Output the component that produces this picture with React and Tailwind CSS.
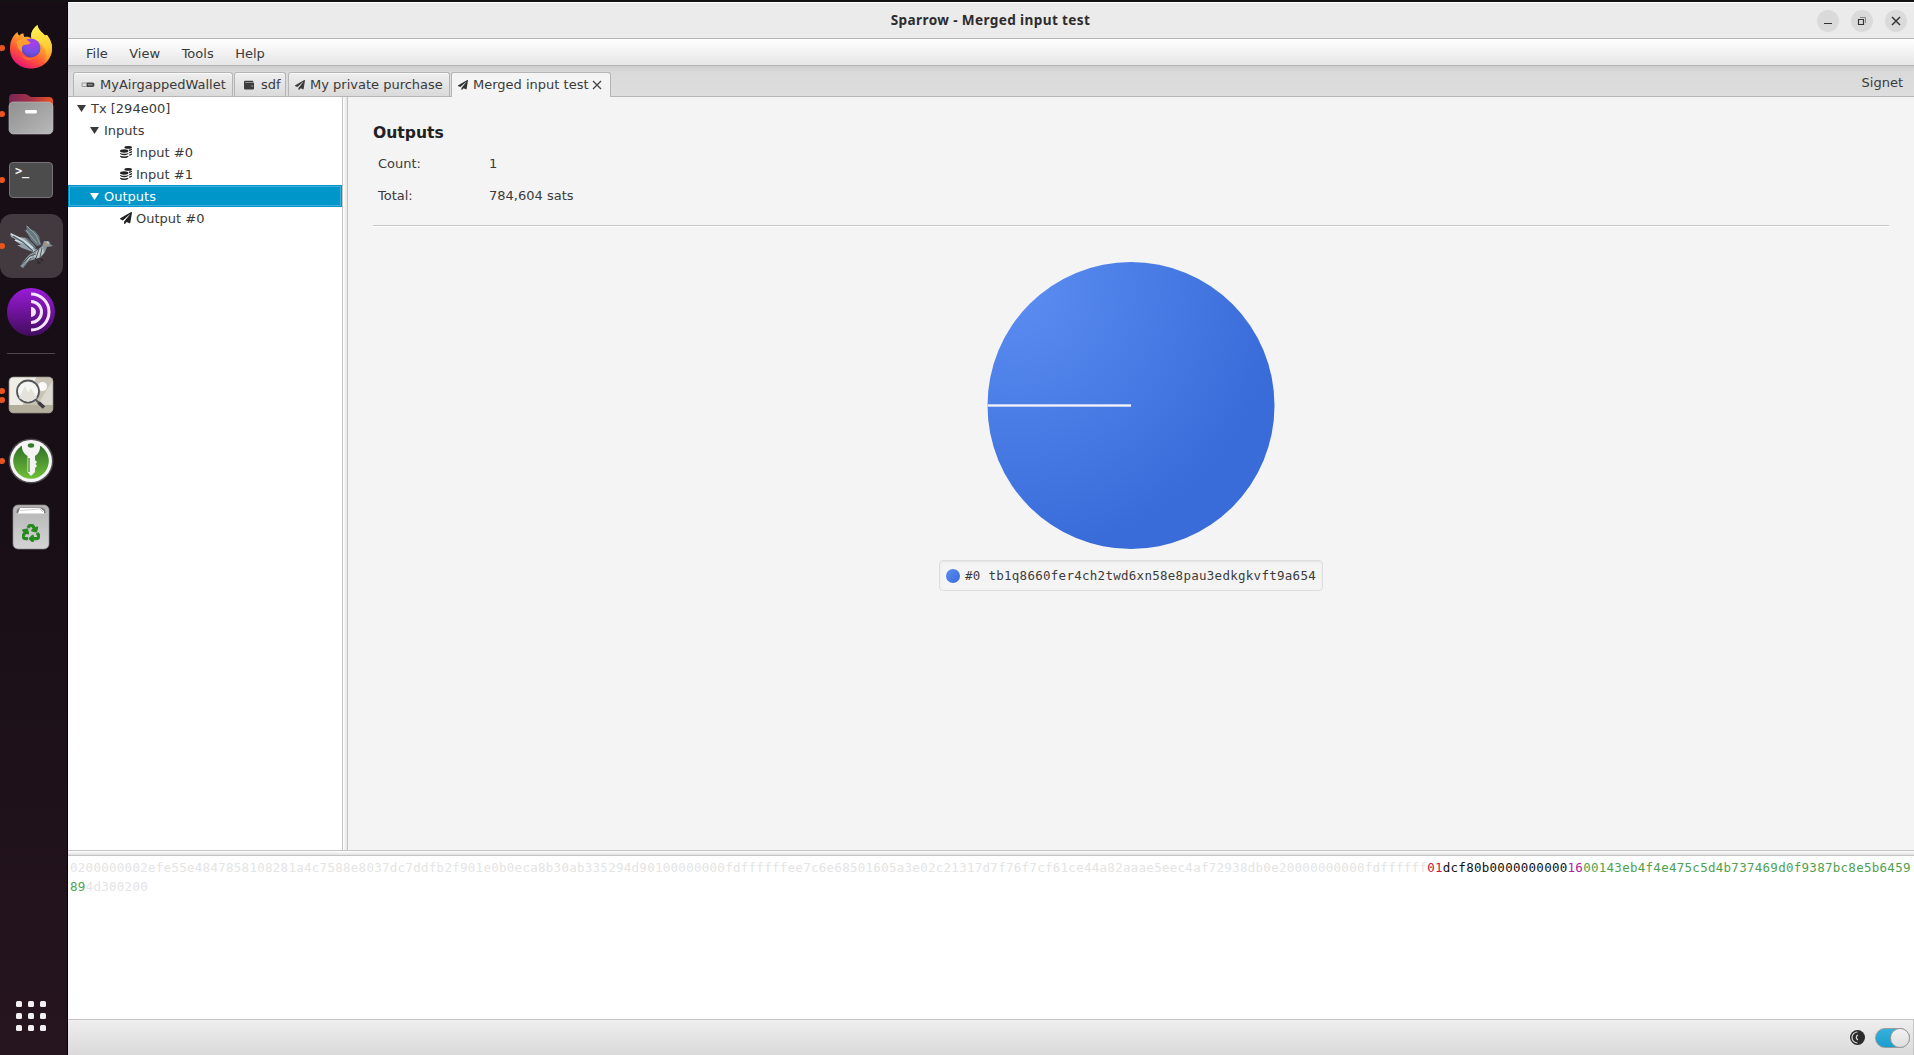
import React from "react";
import { FaPaperPlane, FaRecycle, FaWallet } from "react-icons/fa";

const SANS = "font-['DejaVu_Sans',sans-serif]";
const MONO = "font-['DejaVu_Sans_Mono',monospace]";

function Firefox() {
  return (
    <svg width="44" height="46" viewBox="0 0 44 46">
      <defs>
        <linearGradient id="ffBody" x1="0.8" y1="0.1" x2="0.3" y2="1">
          <stop offset="0" stopColor="#ffe94a" />
          <stop offset="0.4" stopColor="#ffa02c" />
          <stop offset="0.7" stopColor="#ff5238" />
          <stop offset="1" stopColor="#e5117a" />
        </linearGradient>
        <linearGradient id="ffFlame" x1="0.5" y1="0" x2="0.6" y2="1">
          <stop offset="0" stopColor="#fff44f" />
          <stop offset="0.6" stopColor="#ffcb35" />
          <stop offset="1" stopColor="#ff8a24" />
        </linearGradient>
        <radialGradient id="ffGlobe" cx="0.55" cy="0.25" r="0.8">
          <stop offset="0" stopColor="#b13ce6" />
          <stop offset="0.6" stopColor="#7450e6" />
          <stop offset="1" stopColor="#5a3fb5" />
        </radialGradient>
      </defs>
      <path d="M3 15C4 12 6 10 8.500 8C8.500 10 9.500 11 10.500 11.500C12 9.500 13.500 9.500 14.500 9.500L15 13C18 12.500 20 13 22 14C21.500 9 24 4.500 28.500 1C29 6 33 8 36 11.500L38 11C41 15 43 19 43 24C43 36 34 44.500 22 44.500C10 44.500 1 36 1 25C1 21 1.500 17.500 3 15Z" fill="url(#ffBody)" />
      <path d="M28.500 1C29 6 33 8 36 11.500L38 11C41 15 43 19 43 24C43 31 40 36 35 39C38 34 38 27 34 22C30 17 24 17 22.500 13C21.500 9 24 4.500 28.500 1Z" fill="url(#ffFlame)" />
      <circle cx="22" cy="24" r="9.500" fill="url(#ffGlobe)" />
      <path d="M8 17C11 14 18 14 21.500 19C20 21 17 20.500 15 21C12 22 13 26 12.500 28C9 25 7 21 8 17Z" fill="#ff9c30" />
      <path d="M12 29C14 34 22 36 28 31C25 38 14 38 12 29Z" fill="#ff6a30" />
    </svg>
  );
}

function Files() {
  return (
    <svg width="46" height="42" viewBox="0 0 46 42">
      <defs>
        <linearGradient id="fdBack" x1="0" x2="1"><stop offset="0" stopColor="#7a2757" /><stop offset="0.5" stopColor="#a63048" /><stop offset="1" stopColor="#e95420" /></linearGradient>
        <linearGradient id="fdFront" x1="0" x2="1" y1="0" y2="1"><stop offset="0" stopColor="#8f8f8f" /><stop offset="1" stopColor="#b9b9b9" /></linearGradient>
      </defs>
      <path d="M1 6Q1 1 5 1H17Q19 1 20.500 2.500Q22 4 24 4H41Q45 4 45 8V20H1Z" fill="url(#fdBack)" />
      <rect x="1" y="9" width="44" height="32" rx="4.500" fill="url(#fdFront)" stroke="#c0c0c0" strokeOpacity="0.6" />
      <rect x="17" y="17" width="12" height="3.400" rx="1.400" fill="#fff" />
    </svg>
  );
}

function Terminal() {
  return (
    <div className={`h-9 w-11 rounded-[4px] border border-[#747474] bg-[#4c4c4c] pl-[5px] pt-[1px] text-[12px] font-bold leading-[14px] tracking-[-0.3px] text-[#f4f4f4] ${MONO}`}>
      &gt;_
    </div>
  );
}

function Bird() {
  return (
    <svg width="44" height="46" viewBox="0 0 44 46">
      <path d="M17 2L21 6L26 8L30 13L32 22L28 23L22 17L18 10L15 7L18 8Z" fill="#66777d" />
      <path d="M18 3L27 12L31 21M17 7L28 20" stroke="#93a2a6" strokeWidth="1" fill="none" />
      <path d="M1 10L10 14L18 15L25 22L28 27L24 29L13 25L8 22L12 22L5 17L10 18L2 14Z" fill="#93a1ab" />
      <path d="M2 11L14 17L24 25M6 17L18 21L25 28" stroke="#d2dde2" strokeWidth="1.600" fill="none" />
      <path d="M4 13L15 20L24 28M17 15L27 26" stroke="#4f6069" strokeWidth="1.100" fill="none" />
      <path d="M27 28L33 23L35 18L39 18L41 21L44 23L38 24L36 29L32 34L27 36L20 38L14 45L11 43L17 35L21 31Z" fill="#87949a" />
      <path d="M28 28L34 24L35 30L30 35L24 34ZM20 34L24 33L17 40Z" fill="#bcc6c8" />
      <path d="M11 43L21 33L27 31M15 44L22 35M30 26L27 35M33 25L31 34" stroke="#4c595f" strokeWidth="1" fill="none" />
      <path d="M36 20L39 18L41 20L38 22Z" fill="#b5bec0" />
      <circle cx="37.500" cy="21" r="1.300" fill="#b98d5e" />
      <path d="M26 35L31 40M30 35L34 38M28 40H32M32 38L34 36" stroke="#29262b" strokeWidth="1" />
    </svg>
  );
}

function Tor() {
  return (
    <svg width="48" height="48" viewBox="0 0 48 48">
      <defs>
        <linearGradient id="torG" x1="0" x2="0" y1="0" y2="1"><stop offset="0" stopColor="#9a1bda" /><stop offset="1" stopColor="#420c5d" /></linearGradient>
      </defs>
      <circle cx="24" cy="24" r="24" fill="url(#torG)" />
      <path d="M24 6A18 18 0 0 1 24 42M24 13.500A10.500 10.500 0 0 1 24 34.500" fill="none" stroke="#f4e6ff" strokeWidth="3" />
      <path d="M24 19A5 5 0 0 1 24 29Z" fill="#f4e6ff" />
    </svg>
  );
}

function Viewer() {
  return (
    <svg width="46" height="38" viewBox="0 0 46 38">
      <defs><clipPath id="vwClip"><rect x="1" y="1" width="44" height="36" rx="4.500" /></clipPath></defs>
      <g clipPath="url(#vwClip)">
        <rect width="46" height="38" fill="#eeeee7" />
        <path d="M29 0H46V30H14Z" fill="#c9c3b5" />
        <path d="M46 2V30H29Z" fill="#dcdad0" />
        <rect y="29" width="46" height="9" fill="#b4ae9c" />
      </g>
      <circle cx="34.500" cy="10.500" r="4.500" fill="#fafafa" />
      <circle cx="20" cy="15.500" r="11" fill="#f5f5f3" stroke="#55565a" strokeWidth="1.800" />
      <path d="M11 22L17 10L20 17L23 12L29 22L20 26Z" fill="#e3e3dc" />
      <path d="M28 24L31 27" stroke="#55565a" strokeWidth="2" />
      <path d="M30.500 26.500L36 31.500" stroke="#3c3c40" strokeWidth="3.600" />
      <rect x="1" y="1" width="44" height="36" rx="4.500" fill="none" stroke="#8d8a82" strokeOpacity="0.7" />
    </svg>
  );
}

function KeyIcon() {
  return (
    <svg width="46" height="46" viewBox="0 0 46 46">
      <defs>
        <linearGradient id="kpG" x1="0" x2="0" y1="0" y2="1"><stop offset="0" stopColor="#2c6b28" /><stop offset="1" stopColor="#6fc037" /></linearGradient>
      </defs>
      <circle cx="23" cy="23" r="22.500" fill="#4b4a4c" />
      <circle cx="23" cy="23" r="21" fill="#f6f6f6" />
      <circle cx="23" cy="23" r="17.800" fill="url(#kpG)" />
      <path d="M14 7Q23 0 32 7Q33 14 27 18V22L29 24L27.500 26L29 28L27 30V34L23 38L19.500 34V18Q13 14 14 7Z" fill="#f4f4f4" />
      <ellipse cx="23" cy="7.500" rx="3.200" ry="2.200" fill="#35792b" />
      <path d="M21 20V34" stroke="#549b34" strokeWidth="1.500" />
    </svg>
  );
}

function Trash() {
  return (
    <div className="relative flex h-[46px] w-[38px] items-end justify-center pb-2">
      <svg className="absolute inset-0" width="38" height="46" viewBox="0 0 38 46">
        <defs>
          <linearGradient id="trG" x1="0" x2="0" y1="0" y2="1"><stop offset="0" stopColor="#b4b4b4" /><stop offset="1" stopColor="#d4d4d4" /></linearGradient>
        </defs>
        <rect x="1" y="1" width="36" height="44" rx="5" fill="url(#trG)" stroke="#8b8b8b" strokeOpacity="0.7" />
        <path d="M4.500 9Q4.500 3.500 9 3.500H29Q33.500 3.500 33.500 9Z" fill="#777" />
        <path d="M6 9.500L8 4H28L32 7V9.500Z" fill="#fff" />
        <path d="M8 6.500L28 5L31 8" fill="none" stroke="#bbb" strokeWidth="0.700" />
      </svg>
      <FaRecycle className="relative h-[18px] w-[18px] stroke-[#278a20] stroke-[30] text-[#278a20]" />
    </div>
  );
}

function DockCell({ dots = 1, active, children }) {
  return (
    <div className="relative flex h-[66px] w-full items-center">
      {active && <div className="absolute left-0 top-[1px] h-16 w-[63px] rounded-xl bg-[#423a3f]" />}
      <div className="absolute left-[-1px] top-0 flex h-[66px] flex-col justify-center gap-[3px]">
        {Array.from({ length: dots }, (_, i) => (
          <span key={i} className="h-[6px] w-[6px] rounded-full bg-[#e95420]" />
        ))}
      </div>
      <div className="relative flex w-[62px] justify-center">{children}</div>
    </div>
  );
}

function Dock() {
  return (
    <aside className="flex w-[68px] shrink-0 flex-col border-r border-black bg-linear-to-b from-[#170e15] via-[#180e16] to-[#26151f] pt-[13px]">
      <DockCell><div className="-mt-[2px]"><Firefox /></div></DockCell>
      <DockCell><Files /></DockCell>
      <DockCell><Terminal /></DockCell>
      <DockCell active><Bird /></DockCell>
      <DockCell dots={0}><Tor /></DockCell>
      <div className="flex h-[17px] items-center pl-[7px]"><div className="h-px w-12 bg-[#4d464b]" /></div>
      <DockCell dots={2}><Viewer /></DockCell>
      <DockCell><KeyIcon /></DockCell>
      <DockCell dots={0}><Trash /></DockCell>
      <div className="mt-auto mb-6 ml-4 grid w-[30px] grid-cols-3 gap-[6px]">
        {Array.from({ length: 9 }, (_, i) => (
          <span key={i} className="h-[6px] w-[6px] rounded-[1.5px] bg-[#f2f0f0]" />
        ))}
      </div>
    </aside>
  );
}

function WindowButton({ children }) {
  return (
    <div className="flex h-[22px] w-[22px] items-center justify-center rounded-full bg-[#dadada]">
      <svg width="12" height="12" viewBox="0 0 12 12" fill="none" stroke="#333">{children}</svg>
    </div>
  );
}

function TitleBar() {
  return (
    <header className="flex h-9 shrink-0 items-center border-t border-white bg-[#ebebeb]">
      <div className="w-[99px]" />
      <h1 className="grow text-center font-['Noto_Sans',sans-serif] text-[13.6px] font-bold tracking-[0.37px] text-[#2d2d2d]">Sparrow - Merged input test</h1>
      <div className="flex w-[100px] gap-3 pl-[3px]">
        <WindowButton><path d="M2 8.500H10" /></WindowButton>
        <WindowButton>
          <path d="M2.500 4.500H7.500V9.500H2.500Z" strokeWidth="1.200" />
          <path d="M4 2.500H9.500V8" stroke="#888" />
        </WindowButton>
        <WindowButton><path d="M2 2L10 10M10 2L2 10" strokeWidth="1.500" /></WindowButton>
      </div>
    </header>
  );
}

function DeviceIcon() {
  return (
    <svg width="14" height="6" viewBox="0 0 14 6" fill="none">
      <path d="M5 1H1V4.500H5" stroke="#999" />
      <path d="M5.500 0.500H11.500Q13.500 0.500 13.500 2.750Q13.500 5 11.500 5H5.500Z" fill="#444" />
      <path d="M7 2.800H11.500" stroke="#aaa" />
    </svg>
  );
}

function CoinsIcon() {
  return (
    <svg className="-mr-[1px] shrink-0" width="12" height="12" viewBox="0 0 12 12" fill="#222">
      <ellipse cx="8.200" cy="1.400" rx="3.800" ry="1.300" />
      <path d="M8.800 3.500Q11 3.400 12 2.700V3.700Q11.300 4.700 9 4.900Z" />
      <path d="M9.200 6Q11 5.800 12 5.100V6.200Q11.300 7.100 9.200 7.300Z" />
      <path d="M9.200 8.400Q11 8.200 12 7.500V8.500Q11.300 9.500 9.200 9.700Z" />
      <ellipse cx="4.200" cy="5" rx="4.200" ry="1.700" />
      <path d="M0 7Q4.200 8.700 8.400 7V7.800Q7.500 9.200 4.200 9.200Q0.900 9.200 0 7.800Z" />
      <path d="M0 9.700Q4.200 11.300 8.400 9.700V10.500Q7.500 12 4.200 12Q0.900 12 0 10.500Z" />
    </svg>
  );
}

function Tab({ className, active, icon, iconClass, children }) {
  return (
    <div className={`flex items-center rounded-t-[3px] border border-b-0 border-[#b5b5b5] whitespace-nowrap ${active ? "h-[25px] bg-[#f4f4f4]" : "h-6 bg-linear-to-b from-[#eeeeee] to-[#dadada] inset-shadow-[0_1px_0_#fafafa]"} ${className}`}>
      <div className={`flex shrink-0 items-center ${iconClass}`}>{icon}</div>
      {children}
    </div>
  );
}

function TabBar() {
  return (
    <div className="flex h-[31px] shrink-0 items-start border-b border-[#b5b5b5] bg-linear-to-b from-[#cdcdcd] via-[#dadada] via-20% to-[#dddddd] pt-[6px] pl-[5px]">
      <Tab className="w-[160px] pl-[7px]" iconClass="w-[19px]" icon={<DeviceIcon />}>MyAirgappedWallet</Tab>
      <Tab className="ml-[1px] w-[52px] pl-[9px]" iconClass="w-[17px]" icon={<FaWallet className="h-[10px] w-[10px] text-[#3c3c3c]" />}>sdf</Tab>
      <Tab className="ml-[2px] w-[162px] pl-[6px]" iconClass="w-[15px]" icon={<FaPaperPlane className="h-[10px] w-[10px] text-[#3c3c3c]" />}>My private purchase</Tab>
      <Tab active className="ml-[1px] w-[160px] pl-[6px]" iconClass="w-[15px]" icon={<FaPaperPlane className="h-[10px] w-[10px] text-[#333]" />}>
        Merged input test
        <svg className="ml-[3px] shrink-0" width="10" height="10" viewBox="0 0 10 10"><path d="M1 1L9 9M9 1L1 9" stroke="#444" strokeWidth="1.300" /></svg>
      </Tab>
      <span className="ml-auto pr-[11px] leading-[21px]">Signet</span>
    </div>
  );
}

function Arrow() {
  return <svg className="shrink-0" width="9" height="7" viewBox="0 0 9 7"><path d="M0 0H9L4.500 7Z" fill="currentColor" /></svg>;
}

function TreeRow({ className, selected, icon, children }) {
  return (
    <div className={`flex h-[22px] items-center ${selected ? "border border-[#0093cc] bg-[#0096c9] text-white inset-ring inset-ring-[#3aafda]" : ""} ${className}`}>
      {icon}
      <span className="ml-[5px] pt-[2px]">{children}</span>
    </div>
  );
}

function Tree() {
  return (
    <nav className="w-[274px] shrink-0 bg-white">
      <TreeRow className="pl-[9px]" icon={<Arrow />}>Tx [294e00]</TreeRow>
      <TreeRow className="pl-[22px]" icon={<Arrow />}>Inputs</TreeRow>
      <TreeRow className="pl-[52px]" icon={<CoinsIcon />}>Input #0</TreeRow>
      <TreeRow className="pl-[52px]" icon={<CoinsIcon />}>Input #1</TreeRow>
      <TreeRow selected className="pl-[21px]" icon={<Arrow />}>Outputs</TreeRow>
      <TreeRow className="pl-[52px]" icon={<FaPaperPlane className="-mr-[1px] h-3 w-3 text-[#222]" />}>Output #0</TreeRow>
    </nav>
  );
}

function Pie() {
  return (
    <svg width="288" height="287" viewBox="0 0 288 287">
      <defs>
        <radialGradient id="pieG" gradientUnits="userSpaceOnUse" cx="28" cy="28" r="262">
          <stop offset="0" stopColor="#5b8df2" />
          <stop offset="1" stopColor="#396cd9" />
        </radialGradient>
      </defs>
      <circle cx="144" cy="143.500" r="143.500" fill="url(#pieG)" />
      <path d="M0.500 143.500H144" stroke="#a9c0f2" strokeWidth="3" />
      <path d="M0.500 143.500H144" stroke="#f4f4f4" strokeWidth="1.400" />
    </svg>
  );
}

function Details() {
  return (
    <main className="flex grow flex-col bg-[#f4f4f4] pl-[25px] pr-[25px]">
      <h2 className="mt-[26px] text-[15.6px] font-bold leading-5 text-[#222]">Outputs</h2>
      <dl className="mt-[5px] grid grid-cols-[111px_1fr] pl-[5px] leading-8">
        <dt>Count:</dt><dd>1</dd>
        <dt>Total:</dt><dd>784,604 sats</dd>
      </dl>
      <div className="mt-[13px] h-[2px] border-t border-[#c8c8c8] bg-white" />
      <div className="mt-[35px] flex flex-col items-center">
        <Pie />
        <div className={`mt-[11px] flex h-[31px] w-[384px] items-center rounded-[4px] border border-[#dedede] pl-[6px] text-[12.5px] tracking-[0.274px] text-[#3c3c3c] inset-shadow-[0_1px_2px_#e4e4e4] ${MONO}`}>
          <span className="mr-[5px] h-[14px] w-[14px] shrink-0 rounded-full bg-linear-to-br from-[#5b8df2] to-[#386bd8]" />
          <span className="pt-px whitespace-nowrap">#0 tb1q8660fer4ch2twd6xn58e8pau3edkgkvft9a654</span>
        </div>
      </div>
    </main>
  );
}

function HexView() {
  return (
    <section className={`grow bg-white pl-[2px] pt-[2px] text-[12.5px] leading-[19px] tracking-[0.274px] text-[#e4e4e4] ${MONO}`}>
      <div className="whitespace-nowrap">
        0200000002efe55e4847858108281a4c7588e8037dc7ddfb2f901e0b0eca8b30ab335294d90100000000fdffffffee7c6e68501605a3e02c21317d7f76f7cf61ce44a82aaae5eec4af72938db0e20000000000fdffffff
        <span className="text-[#ca1243]">01</span>
        <span className="text-[#111]">dcf80b0000000000</span>
        <span className="text-[#a626a4]">16</span>
        <span className="text-[#50a14f]">00143eb4f4e475c5d4b737469d0f9387bc8e5b6459</span>
      </div>
      <div><span className="text-[#50a14f]">89</span>4d300200</div>
    </section>
  );
}

function StatusBar() {
  return (
    <footer className="flex h-9 shrink-0 items-center justify-end border-t border-r border-[#c6c6c6] bg-linear-to-b from-[#eeeeee] to-[#dadada] pr-[3px]">
      <svg className="mr-[10px]" width="15" height="15" viewBox="0 0 15 15">
        <circle cx="7.500" cy="7.500" r="7.500" fill="#2b2b2b" />
        <path d="M7.500 2A5.500 5.500 0 0 0 7.500 13" fill="none" stroke="#d9d9d9" strokeWidth="1.200" />
        <path d="M8 5.200A2.400 2.400 0 0 0 8 9.800" fill="none" stroke="#d9d9d9" strokeWidth="1.300" />
      </svg>
      <div className="flex h-5 w-[35px] items-center justify-end rounded-full border border-[#9b9b9b] bg-linear-to-b from-[#35b0dc] to-[#1a9dcd]">
        <div className="-mr-px h-5 w-5 rounded-full border border-[#9b9b9b] bg-linear-to-b from-[#f2f2f2] to-[#dedede]" />
      </div>
    </footer>
  );
}

export default function App() {
  return (
    <div className={`flex h-[1055px] w-[1914px] flex-col overflow-hidden bg-[#141211] text-[13px] text-[#3a3a3a] ${SANS}`}>
      <div className="h-[2px] shrink-0 bg-[#131111]" />
      <div className="flex min-h-0 grow">
        <Dock />
        <div className="flex min-w-0 grow flex-col">
          <TitleBar />
          <div className="flex h-7 shrink-0 items-center gap-[21.5px] border-y border-[#b5b5b5] bg-linear-to-b from-white to-[#e6e6e6] pl-[18px] pt-[3px]">
            <span>File</span><span>View</span><span>Tools</span><span>Help</span>
          </div>
          <TabBar />
          <div className="flex h-[753px] shrink-0">
            <Tree />
            <div className="w-[6px] shrink-0 border-x border-[#c4c4c4] bg-linear-to-r from-white to-[#e6e6e6]" />
            <Details />
          </div>
          <div className="h-[6px] shrink-0 border-y border-[#c4c4c4] bg-linear-to-b from-white to-[#e0e0e0]" />
          <HexView />
          <StatusBar />
        </div>
      </div>
    </div>
  );
}
